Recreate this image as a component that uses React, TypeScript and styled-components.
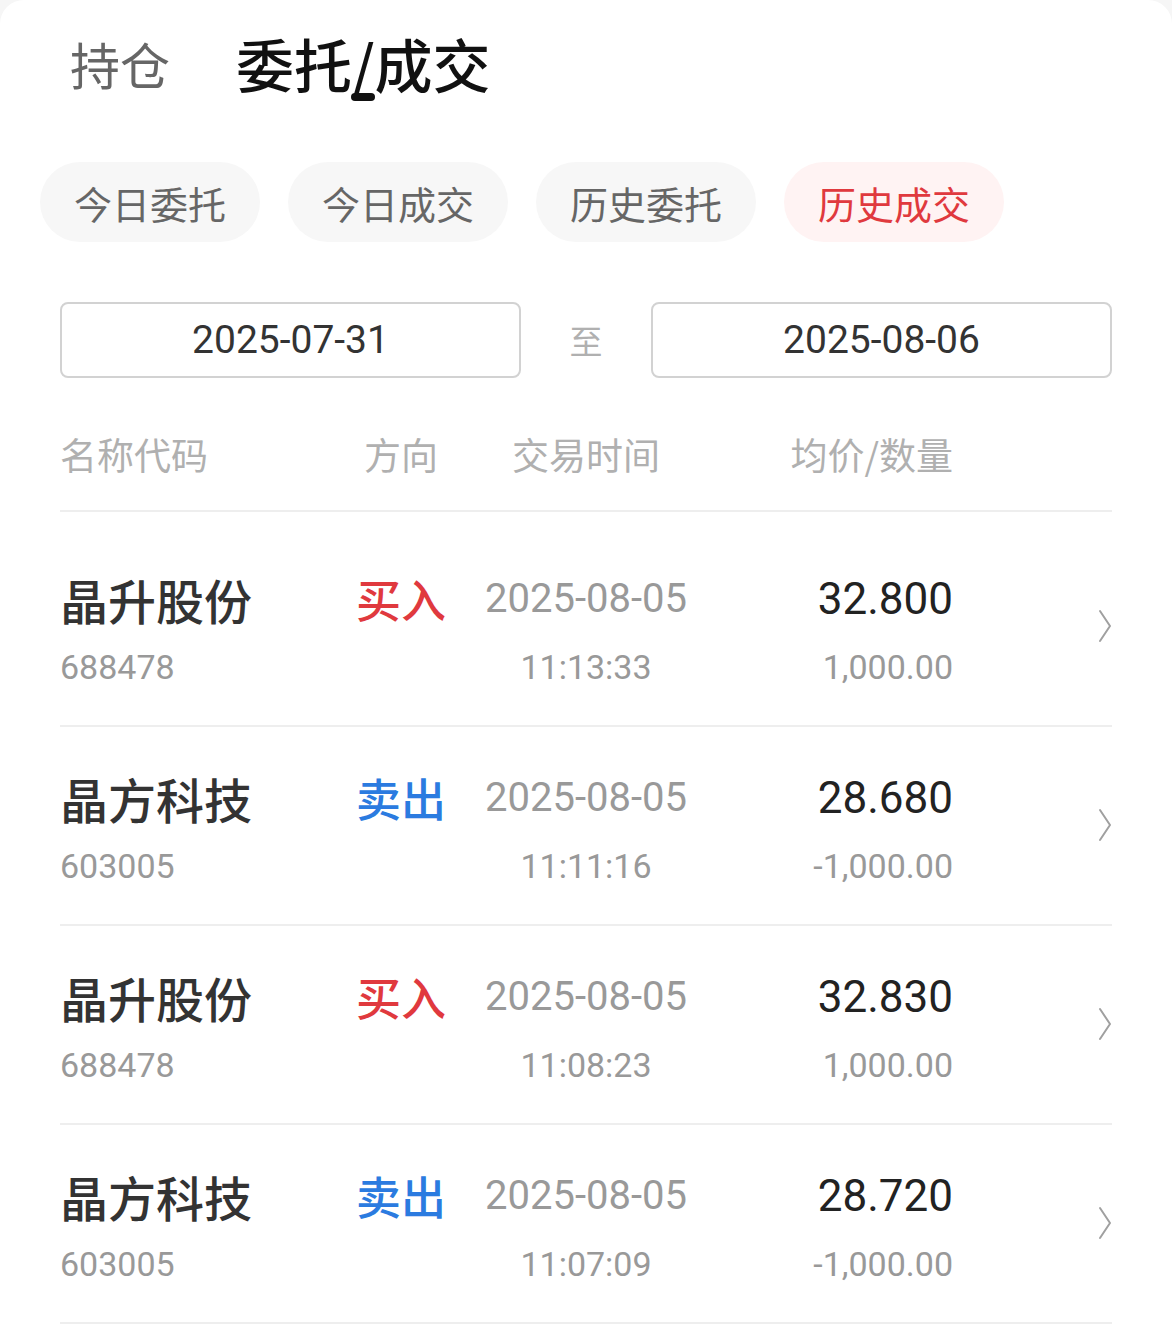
import React from "react"
import styled, { createGlobalStyle } from "styled-components"

const CJK = `"Noto Sans CJK SC", "Noto Sans", sans-serif`
const NUM = `Roboto, "Noto Sans CJK SC", sans-serif`

const GlobalStyle = createGlobalStyle`
    html, body {
        margin: 0;
        padding: 0;
        background: #f6f6f6;
    }
    * {
        box-sizing: border-box;
    }
`

const Card = styled.div`
    width: 1172px;
    min-height: 1344px;
    background: #ffffff;
    border-radius: 24px 24px 0 0;
    overflow: hidden;
    font-family: ${CJK};
`

const TopTabs = styled.div`
    display: flex;
    align-items: center;
    gap: 66px;
    height: 126px;
    padding: 0 70px;
`

const TopTab = styled.div<{ $active?: boolean }>`
    position: relative;
    font-size: ${({ $active }) => ($active ? '58px' : '50px')};
    line-height: 1;
    font-weight: ${({ $active }) => ($active ? 500 : 400)};
    color: ${({ $active }) => ($active ? '#111111' : '#666666')};

    &::after {
        content: '';
        display: ${({ $active }) => ($active ? 'block' : 'none')};
        position: absolute;
        left: 50%;
        top: calc(100% + 1px);
        width: 24px;
        height: 8px;
        margin-left: -12px;
        border-radius: 4px;
        background: #111111;
    }
`

const Pills = styled.div`
    display: flex;
    gap: 28px;
    padding: 36px 40px 0;
`

const Pill = styled.div<{ $active?: boolean }>`
    width: 220px;
    height: 80px;
    border-radius: 40px;
    display: flex;
    align-items: center;
    justify-content: center;
    font-size: 38px;
    color: ${({ $active }) => ($active ? '#e0393e' : '#666666')};
    background: ${({ $active }) => ($active ? '#fff3f3' : '#f7f7f7')};
`

const DateRow = styled.div`
    display: grid;
    grid-template-columns: 1fr 130px 1fr;
    align-items: center;
    padding: 60px 60px 0;
`

const DateBox = styled.div`
    height: 76px;
    border: 2px solid #d2d2d2;
    border-radius: 8px;
    display: flex;
    align-items: center;
    justify-content: center;
    font-family: ${NUM};
    font-size: 39px;
    color: #333333;
`

const To = styled.div`
    text-align: center;
    font-size: 33px;
    color: #b0b0b0;
`

const Table = styled.div`
    padding: 0 60px;
`

const Columns = styled.div`
    display: grid;
    grid-template-columns: 280px 122px 248px 243px 1fr;
`

const HeaderRow = styled(Columns)`
    padding: 56px 0 36px;
    border-bottom: 2px solid #eeeeee;
    font-size: 37px;
    line-height: 40px;
    color: #b0b0b0;
`

const HeadCell = styled.div<{ $align: 'left' | 'center' | 'right' }>`
    text-align: ${({ $align }) => $align};
`

const List = styled.div`
    padding-top: 16px;
`

const Row = styled(Columns)`
    padding: 43px 0 38px;
    border-bottom: 2px solid #eeeeee;
`

const Cell = styled.div<{ $align: 'flex-start' | 'center' | 'flex-end' }>`
    display: flex;
    flex-direction: column;
    align-items: ${({ $align }) => $align};
    gap: 20px;
`

const Name = styled.div`
    font-size: 48px;
    line-height: 56px;
    font-weight: 500;
    color: #333333;
`

const Side = styled.div<{ $buy: boolean }>`
    font-size: 45px;
    line-height: 56px;
    font-weight: 500;
    color: ${({ $buy }) => ($buy ? '#e0393e' : '#2b7be0')};
`

const BigNum = styled.div<{ $dark?: boolean }>`
    font-family: ${NUM};
    font-size: ${({ $dark }) => ($dark ? '44px' : '40px')};
    line-height: 56px;
    color: ${({ $dark }) => ($dark ? '#222222' : '#999999')};
`

const SmallNum = styled.div`
    font-family: ${NUM};
    font-size: 34px;
    line-height: 40px;
    color: #999999;
`

const Arrow = styled.div`
    align-self: center;
    justify-self: end;
    display: flex;
    margin-top: -6px;
`

const Chevron = () => (
    <svg width="14" height="34" viewBox="0 0 14 34" fill="none">
        <polyline points="2,2 12,17 2,32" stroke="#a0a0a0" strokeWidth="2" strokeLinecap="round" strokeLinejoin="round" />
    </svg>
)

const trades = [
    { name: '晶升股份', code: '688478', buy: true, date: '2025-08-05', time: '11:13:33', price: '32.800', qty: '1,000.00' },
    { name: '晶方科技', code: '603005', buy: false, date: '2025-08-05', time: '11:11:16', price: '28.680', qty: '-1,000.00' },
    { name: '晶升股份', code: '688478', buy: true, date: '2025-08-05', time: '11:08:23', price: '32.830', qty: '1,000.00' },
    { name: '晶方科技', code: '603005', buy: false, date: '2025-08-05', time: '11:07:09', price: '28.720', qty: '-1,000.00' },
]

const filters = ['今日委托', '今日成交', '历史委托', '历史成交']

export default function App() {
    return (
        <>
            <GlobalStyle />
            <Card>
                <TopTabs>
                    <TopTab>持仓</TopTab>
                    <TopTab $active>委托/成交</TopTab>
                </TopTabs>

                <Pills>
                    {filters.map((f, i) => (
                        <Pill key={f} $active={i === filters.length - 1}>{f}</Pill>
                    ))}
                </Pills>

                <DateRow>
                    <DateBox>2025-07-31</DateBox>
                    <To>至</To>
                    <DateBox>2025-08-06</DateBox>
                </DateRow>

                <Table>
                    <HeaderRow>
                        <HeadCell $align='left'>名称代码</HeadCell>
                        <HeadCell $align='center'>方向</HeadCell>
                        <HeadCell $align='center'>交易时间</HeadCell>
                        <HeadCell $align='right'>均价/数量</HeadCell>
                        <div />
                    </HeaderRow>

                    <List>
                        {trades.map((t, i) => (
                            <Row key={i}>
                                <Cell $align='flex-start'>
                                    <Name>{t.name}</Name>
                                    <SmallNum>{t.code}</SmallNum>
                                </Cell>
                                <Cell $align='center'>
                                    <Side $buy={t.buy}>{t.buy ? '买入' : '卖出'}</Side>
                                </Cell>
                                <Cell $align='center'>
                                    <BigNum>{t.date}</BigNum>
                                    <SmallNum>{t.time}</SmallNum>
                                </Cell>
                                <Cell $align='flex-end'>
                                    <BigNum $dark>{t.price}</BigNum>
                                    <SmallNum>{t.qty}</SmallNum>
                                </Cell>
                                <Arrow><Chevron /></Arrow>
                            </Row>
                        ))}
                    </List>
                </Table>
            </Card>
        </>
    )
}
